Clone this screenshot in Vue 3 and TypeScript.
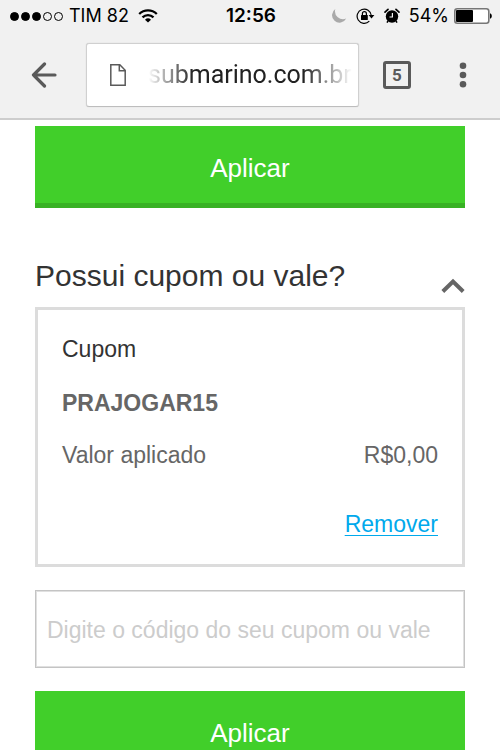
<script setup lang="ts">
import { ref } from 'vue'

const carrier = 'TIM 82'
const time = '12:56'
const battery = 54
const signalDots = [true, true, true, false, false]
const address = ref('submarino.com.br')
const tabCount = 5

const open = ref(true)
const code = ref('')
const coupon = ref<{ code: string; value: string } | null>({ code: 'PRAJOGAR15', value: 'R$0,00' })

function removeCoupon() {
  coupon.value = null
}

function applyCode() {
  if (!code.value) return
  coupon.value = { code: code.value.toUpperCase(), value: 'R$0,00' }
  code.value = ''
}
</script>

<template>
  <div class="screen">
    <header class="chrome">
      <div class="status">
        <div class="status-left">
          <span class="signal">
            <i v-for="(on, i) in signalDots" :key="i" class="dot" :class="{ on }"></i>
          </span>
          <span>{{ carrier }}</span>
          <svg class="wifi" viewBox="0 0 20 14" width="20" height="14" aria-hidden="true">
            <path d="M1.200 5a12.600 12.600 0 0 1 17.600 0" fill="none" stroke="#000" stroke-width="2.300" />
            <path d="M4.500 8.300a8 8 0 0 1 11 0" fill="none" stroke="#000" stroke-width="2.300" />
            <path d="M10 13.600 7 10.700a4.300 4.300 0 0 1 6 0Z" fill="#000" />
          </svg>
        </div>
        <strong class="time">{{ time }}</strong>
        <div class="status-right">
          <svg viewBox="0 0 16 16" width="16" height="16" aria-hidden="true">
            <path d="M4.300 1A7.500 7.500 0 1 0 15.200 10.600A8.100 8.100 0 0 1 4.300 1Z" fill="#a9a9a9" />
          </svg>
          <svg viewBox="0 0 19 16" width="19" height="16" aria-hidden="true">
            <path d="M13.300 13.200A7.100 7.100 0 1 1 15.300 7.500" fill="none" stroke="#000" stroke-width="1.200" />
            <path d="M12.600 7h5.800l-2.900 3.500Z" fill="#000" />
            <rect x="5" y="7" width="6.800" height="5" rx=".5" fill="#000" />
            <path d="M6.400 7.400V5.700a2 2 0 0 1 4 0v1.700" fill="none" stroke="#000" stroke-width="1.200" />
          </svg>
          <svg viewBox="0 0 16 16" width="16" height="16" aria-hidden="true">
            <circle cx="8" cy="8.500" r="6.200" fill="#000" />
            <path d="M8.400 5v4H5.500" fill="none" stroke="#f1f1f1" stroke-width="1.200" />
            <path d="M1 4.100 4 1.300M15 4.100 12 1.300" fill="none" stroke="#000" stroke-width="1.700" stroke-linecap="round" />
            <path d="m4 13-1 1.700M12 13l1 1.700" stroke="#000" stroke-width="1.500" />
          </svg>
          <span>{{ battery }}%</span>
          <svg class="battery" viewBox="0 0 38 16" width="38" height="16" aria-hidden="true">
            <rect x=".8" y=".8" width="34" height="14.400" rx="2.500" fill="#fff" stroke="#777" stroke-width="1.600" />
            <rect x="2" y="2" width="17" height="12" rx="1" fill="#000" />
            <path d="M36 5.200c2.400.8 2.400 4.800 0 5.600Z" fill="#000" />
          </svg>
        </div>
      </div>

      <nav class="toolbar" aria-label="Navegador">
        <button class="icon-button back" type="button" aria-label="Voltar">
          <svg viewBox="0 0 26 26" width="26" height="26">
            <path d="M24 13H2.500M13.500 2 2.500 13l11 11" fill="none" stroke="#5a5a5a" stroke-width="3.200" stroke-linecap="round" stroke-linejoin="round" />
          </svg>
        </button>
        <div class="omnibox">
          <svg viewBox="0 0 16 22" width="16" height="22" aria-hidden="true">
            <path d="M.8.800h9l5.400 5.400v15H.8Z" fill="none" stroke="#5a5a5a" stroke-width="1.500" />
            <path d="M9.300.8v6h5.900" fill="none" stroke="#5a5a5a" stroke-width="1.500" />
          </svg>
          <input v-model="address" class="address" type="text" aria-label="Endereço" />
        </div>
        <button class="tabs" type="button" aria-label="Abas abertas">{{ tabCount }}</button>
        <button class="icon-button menu" type="button" aria-label="Menu">
          <svg viewBox="0 0 8 26" width="8" height="26">
            <circle cx="4" cy="3.800" r="3.300" fill="#5a5a5a" />
            <circle cx="4" cy="13" r="3.300" fill="#5a5a5a" />
            <circle cx="4" cy="22.200" r="3.300" fill="#5a5a5a" />
          </svg>
        </button>
      </nav>
    </header>

    <main class="page">
      <button class="apply" type="button">Aplicar</button>

      <section class="coupon-section">
        <h2 class="title">
          <button class="toggle" type="button" :aria-expanded="open" @click="open = !open">
            <span>Possui cupom ou vale?</span>
            <svg class="chevron" :class="{ closed: !open }" viewBox="0 0 24 16" width="24" height="16" aria-hidden="true">
              <path d="M1.800 13.500 12 3.500 22.200 13.500" fill="none" stroke="#666" stroke-width="4" />
            </svg>
          </button>
        </h2>

        <div v-if="open" class="panel">
          <article v-if="coupon" class="card">
            <h3 class="card-title">Cupom</h3>
            <strong class="code">{{ coupon.code }}</strong>
            <div class="row">
              <span>Valor aplicado</span>
              <span>{{ coupon.value }}</span>
            </div>
            <a class="remove" href="#" @click.prevent="removeCoupon">Remover</a>
          </article>

          <form class="form" @submit.prevent="applyCode">
            <input v-model="code" class="field" type="text" aria-label="Código do cupom ou vale" placeholder="Digite o código do seu cupom ou vale" />
            <button class="apply" type="submit">Aplicar</button>
          </form>
        </div>
      </section>
    </main>
  </div>
</template>

<style>
body {
  margin: 0;
  background: #fff;
}
</style>

<style scoped>
.screen {
  display: flex;
  flex-direction: column;
  height: 100vh;
  font-family: "Liberation Sans", Arial, sans-serif;
  color: #333;
}

.screen *,
.screen {
  box-sizing: border-box;
}

button,
input {
  margin: 0;
  padding: 0;
  border: 0;
  border-radius: 0;
  background: none;
  font: inherit;
  color: inherit;
}

button {
  cursor: pointer;
}

svg {
  display: block;
  flex: none;
}

.chrome {
  flex: none;
  background: #f1f1f1;
  border-bottom: 2px solid #cdcdcd;
}

.status {
  display: flex;
  align-items: center;
  height: 32px;
  padding: 0 8px 0 10px;
  font-family: Inter, Roboto, sans-serif;
  font-size: 18px;
  line-height: 32px;
  color: #000;
}

.status-left,
.status-right {
  display: flex;
  flex: 1;
  align-items: center;
}

.status-left {
  gap: 6px;
}

.status-right {
  justify-content: flex-end;
  gap: 9px;
}

.wifi {
  margin-left: 3px;
}

.battery {
  margin-left: -4px;
}

.signal {
  display: flex;
  gap: 2px;
}

.dot {
  width: 9px;
  height: 9px;
  border: 1px solid #000;
  border-radius: 50%;
}

.dot.on {
  background: #000;
}

.time {
  font-size: 19px;
  font-weight: 600;
}

.toolbar {
  display: flex;
  align-items: center;
  padding: 11px 33px 11px 31px;
}

.icon-button {
  display: flex;
  align-items: center;
  justify-content: center;
  height: 44px;
}

.omnibox {
  display: flex;
  flex: 1;
  align-items: center;
  gap: 22px;
  min-width: 0;
  height: 64px;
  margin: 0 24px 0 29px;
  padding: 0 6px 0 23px;
  border: 1px solid #d0d0d0;
  border-bottom-color: #bdbdbd;
  border-radius: 3px;
  background: #fff;
  box-shadow: 0 0 1px #c4c4c4;
}

.address {
  flex: 1;
  min-width: 0;
  font-family: Roboto, sans-serif;
  font-size: 25px;
  line-height: 34px;
  color: #222;
  outline: none;
  -webkit-mask-image: linear-gradient(to right, transparent, #000 22%, #000 76%, transparent);
  mask-image: linear-gradient(to right, transparent, #000 22%, #000 76%, transparent);
}

.tabs {
  flex: none;
  width: 28px;
  height: 28px;
  margin-right: 48px;
  border: 3px solid #5a5a5a;
  border-radius: 3px;
  font-family: Roboto, sans-serif;
  font-size: 17px;
  font-weight: 700;
  line-height: 22px;
  color: #5a5a5a;
}

.page {
  flex: 1;
  min-height: 0;
  padding: 6px 35px 24px;
  overflow-y: auto;
  scrollbar-width: none;
}

.apply {
  display: block;
  width: 100%;
  height: 82px;
  padding-top: 6px;
  border-bottom: 5px solid #38b124;
  background: #41cf2a;
  font-size: 26px;
  line-height: 32px;
  color: #fff;
}

.coupon-section {
  padding-top: 48px;
}

.title {
  margin: 0;
  font-size: 30px;
  font-weight: 400;
  line-height: 40px;
}

.toggle {
  display: flex;
  align-items: flex-end;
  justify-content: space-between;
  width: 100%;
  height: 40px;
  text-align: left;
}

.chevron {
  margin-bottom: 2px;
}

.chevron.closed {
  transform: rotate(180deg);
}

.panel {
  display: flex;
  flex-direction: column;
  gap: 23px;
  padding-top: 11px;
}

.card {
  display: flex;
  flex-direction: column;
  padding: 23px 24px 26px;
  border: 3px solid #dcdcdc;
  font-size: 23px;
  line-height: 32px;
  color: #666;
}

.card-title {
  margin: 0;
  font: inherit;
  color: #333;
}

.code {
  margin-top: 22px;
}

.row {
  display: flex;
  justify-content: space-between;
  margin-top: 20px;
}

.remove {
  align-self: flex-end;
  margin-top: 40px;
  color: #00a9ec;
  line-height: 26px;
  text-decoration: underline;
  text-decoration-thickness: 1px;
  text-underline-offset: 3px;
  border-bottom: 1px solid transparent;
}

.form {
  display: flex;
  flex-direction: column;
  gap: 23px;
}

.field {
  width: 100%;
  height: 78px;
  padding: 3px 11px 0;
  border: 1px solid #c4c4c4;
  box-shadow: inset 0 0 0 1px #e0e0e0;
  font-size: 23px;
  color: #333;
}

.field::placeholder {
  color: #ccc;
  opacity: 1;
}
</style>
